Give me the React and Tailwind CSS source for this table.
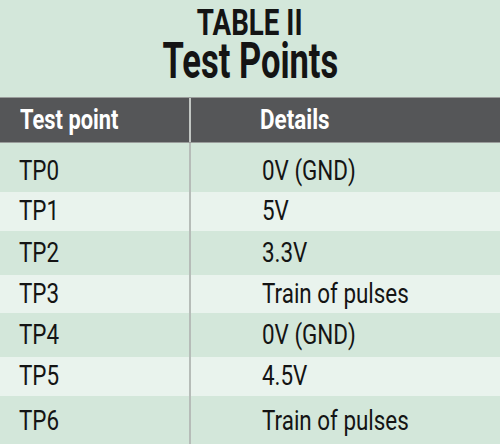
const rows = [
  { tp: 'TP0', detail: '0V (GND)', h: 'h-[49px]', pad: 'pt-[7px]', bg: 'bg-[#d3e7da]' },
  { tp: 'TP1', detail: '5V', h: 'h-[39px]', pad: '', bg: 'bg-[#e9f3ed]' },
  { tp: 'TP2', detail: '3.3V', h: 'h-[44px]', pad: '', bg: 'bg-[#d3e7da]' },
  { tp: 'TP3', detail: 'Train of pulses', h: 'h-[38px]', pad: '', bg: 'bg-[#e9f3ed]' },
  { tp: 'TP4', detail: '0V (GND)', h: 'h-[44px]', pad: '', bg: 'bg-[#d3e7da]' },
  { tp: 'TP5', detail: '4.5V', h: 'h-[39px]', pad: '', bg: 'bg-[#e9f3ed]' },
  { tp: 'TP6', detail: 'Train of pulses', h: 'h-[48px]', pad: 'pt-[2px]', bg: 'bg-[#d3e7da]' },
];

export default function App() {
  return (
    <div className="w-[500px] h-[444px] overflow-hidden bg-[#d3e7da] font-['Roboto',sans-serif] text-[#141414]">
      {/* Title */}
      <div className="h-[97px] flex flex-col items-center pt-[5px]">
        <div className="text-[36px] leading-[36px] font-bold scale-x-[0.77] whitespace-nowrap">TABLE II</div>
        <div className="text-[50px] leading-[40px] font-bold scale-x-[0.69] whitespace-nowrap">Test Points</div>
      </div>

      {/* Header */}
      <div className="h-[46px] flex bg-[#555658] border-t border-b border-[#9a9d9b] text-white font-bold text-[28px]">
        <div className="w-[191px] flex items-center pl-[20px] border-r-2 border-[#c2c6c3]">
          <span className="inline-block origin-left scale-x-[0.78] whitespace-nowrap">Test point</span>
        </div>
        <div className="flex-1 flex items-center pl-[69px]">
          <span className="inline-block origin-left scale-x-[0.8] whitespace-nowrap">Details</span>
        </div>
      </div>

      {/* Rows */}
      {rows.map((r) => (
        <div key={r.tp} className={`flex text-[27px] ${r.h} ${r.bg}`}>
          <div className={`w-[191px] flex items-center pl-[19px] border-r-2 border-[#b6bcb8] ${r.pad}`}>
            <span className="inline-block origin-left scale-x-[0.83] whitespace-nowrap">{r.tp}</span>
          </div>
          <div className={`flex-1 flex items-center pl-[71px] ${r.pad}`}>
            <span className="inline-block origin-left scale-x-[0.83] whitespace-nowrap">{r.detail}</span>
          </div>
        </div>
      ))}
    </div>
  );
}
